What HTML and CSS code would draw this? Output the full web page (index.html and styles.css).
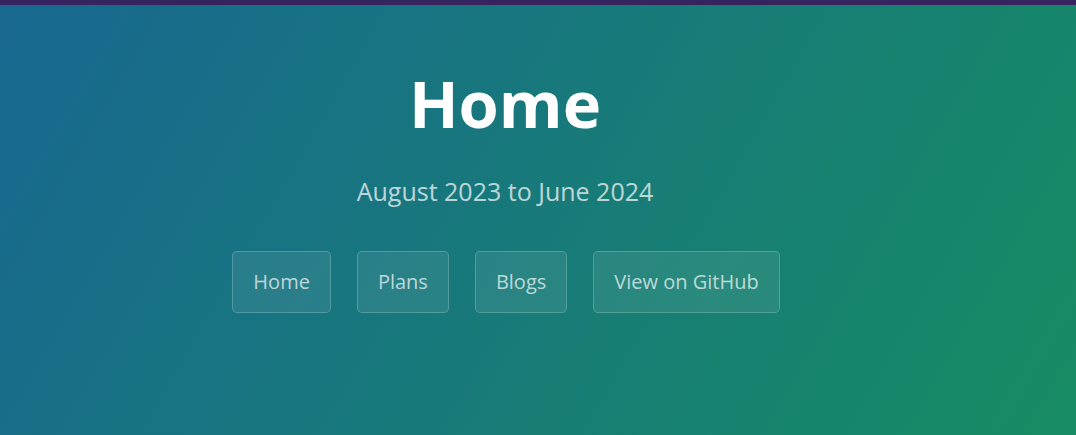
FILE: index.html
```html
<!DOCTYPE html>
<html lang="en">
<head>
<meta charset="utf-8">
<title>Home</title>
<link rel="stylesheet" href="styles.css">
</head>
<body>
<div class="topbar"></div>
<header class="page-header">
  <h1 class="project-name">Home</h1>
  <h2 class="project-tagline">August 2023 to June 2024</h2>
  <nav class="btn-group">
    <a class="btn" href="#">Home</a>
    <a class="btn" href="#">Plans</a>
    <a class="btn" href="#">Blogs</a>
    <a class="btn" href="#">View on GitHub</a>
  </nav>
</header>
</body>
</html>
```

FILE: styles.css
```css
html, body {
  margin: 0;
  padding: 0;
  height: 100%;
}
body {
  font-family: "Open Sans", "Noto Sans", sans-serif;
  background: #178b62;
  overflow: hidden;
}
.topbar {
  height: 5px;
  background: #36245f;
}
.page-header {
  height: 430px;
  box-sizing: border-box;
  padding: 63px 66px 0 0;
  display: flex;
  flex-direction: column;
  align-items: center;
  color: #fff;
  background-color: #178b62;
  background-image: linear-gradient(120deg, #186890, #178c63);
}
.project-name {
  margin: 0;
  font-size: 65px;
  font-weight: 700;
  line-height: 1.1;
}
.project-tagline {
  margin: 33px 0 0;
  font-size: 25px;
  font-weight: 400;
  line-height: 1.5;
  opacity: 0.7;
}
.btn-group {
  display: flex;
  gap: 26px;
  margin-top: 41px;
  margin-left: 2px;
}
.btn {
  display: inline-block;
  padding: 15px 20px;
  font-size: 20px;
  line-height: 1.5;
  color: rgba(255, 255, 255, 0.7);
  text-decoration: none;
  background-color: rgba(255, 255, 255, 0.08);
  border: 1px solid rgba(255, 255, 255, 0.2);
  border-radius: 5px;
}
```
